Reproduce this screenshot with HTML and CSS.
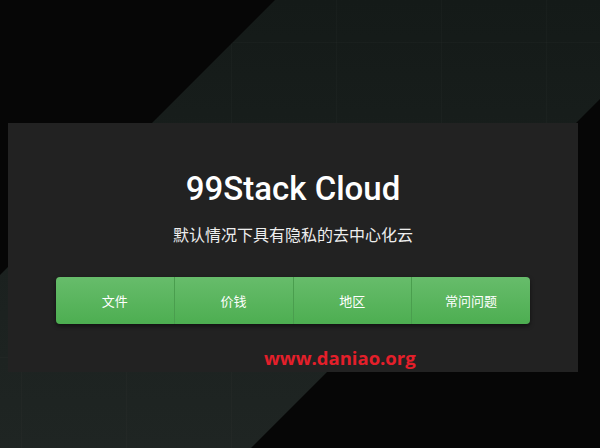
FILE: index.html
```html
<!DOCTYPE html>
<html lang="zh">
<head>
<meta charset="utf-8">
<link rel="stylesheet" href="styles.css">
</head>
<body>
<div class="band"></div>
<main class="card">
  <h1 class="title">99Stack Cloud</h1>
  <p class="subtitle">默认情况下具有隐私的去中心化云</p>
  <nav class="btn-group">
    <a class="btn">文件</a>
    <a class="btn">价钱</a>
    <a class="btn">地区</a>
    <a class="btn">常问问题</a>
  </nav>
  <div class="watermark">www.daniao.org</div>
</main>
</body>
</html>
```

FILE: styles.css
```css
html, body {
  margin: 0;
  padding: 0;
}
body {
  width: 600px;
  height: 448px;
  overflow: hidden;
  background: #060606;
  font-family: Roboto, "Noto Sans CJK SC", sans-serif;
  position: relative;
  padding-top: 123px;
  box-sizing: border-box;
}
.band {
  position: absolute;
  inset: 0;
  clip-path: polygon(275px 0, 600px 0, 600px 99px, 251px 448px, 0 448px, 0 275px);
  background:
    linear-gradient(90deg, transparent 21px, rgba(255,255,255,0.015) 21px, rgba(255,255,255,0.015) 22px, transparent 22px) 0 0 / 105px 100%,
    linear-gradient(180deg, transparent 42px, rgba(255,255,255,0.015) 42px, rgba(255,255,255,0.015) 43px, transparent 43px) 0 0 / 100% 105px,
    linear-gradient(180deg, #141a18 0%, #1a201e 50%, #1f2523 100%);
  z-index: 0;
}
.card {
  position: relative;
  z-index: 1;
  margin-left: 8px;
  width: 570px;
  height: 249px;
  background: #222222;
  display: flex;
  flex-direction: column;
  align-items: center;
  box-sizing: border-box;
  padding-top: 48px;
}
.title {
  margin: 0;
  font-family: Roboto, sans-serif;
  font-weight: 500;
  font-size: 33px;
  line-height: 36px;
  color: #ffffff;
}
.subtitle {
  margin: 16px 0 0;
  font-family: "Noto Sans CJK SC", sans-serif;
  font-size: 16px;
  line-height: 22px;
  color: #eeeeee;
}
.btn-group {
  margin-top: 32px;
  width: 474px;
  height: 47px;
  display: flex;
  border-radius: 4px;
  overflow: hidden;
  background: linear-gradient(180deg, #67bc6b 0%, #4dae51 100%);
  box-shadow: 0 2px 4px rgba(0,0,0,0.5);
}
.btn {
  flex: 1;
  display: flex;
  align-items: center;
  justify-content: center;
  color: #ffffff;
  font-family: "Noto Sans CJK SC", sans-serif;
  font-size: 13px;
  border-left: 1px solid #4a9e4e;
}
.btn:first-child {
  border-left: none;
}
.watermark {
  position: absolute;
  left: 256px;
  top: 222px;
  font-family: "Open Sans", sans-serif;
  font-weight: 700;
  font-size: 18.5px;
  line-height: 25px;
  color: #e41f2a;
}
```
